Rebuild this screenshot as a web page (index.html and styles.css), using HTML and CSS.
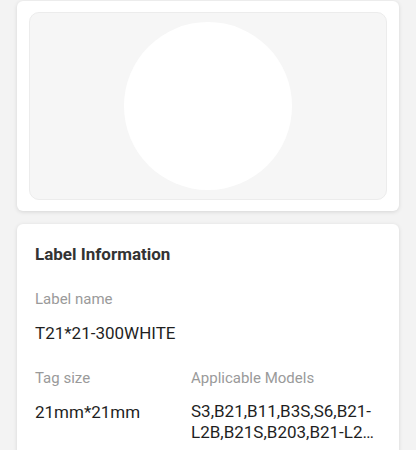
FILE: index.html
```html
<!DOCTYPE html>
<html>
<head>
<meta charset="utf-8">
<link rel="stylesheet" href="styles.css">
</head>
<body>
<div class="page">
  <div class="card preview-card">
    <div class="preview">
      <div class="label-circle"></div>
    </div>
  </div>
  <div class="card info-card">
    <div class="title">Label Information</div>
    <div class="field">
      <div class="field-label">Label name</div>
      <div class="field-value">T21*21-300WHITE</div>
    </div>
    <div class="row">
      <div class="field col-size">
        <div class="field-label">Tag size</div>
        <div class="field-value">21mm*21mm</div>
      </div>
      <div class="field col-models">
        <div class="field-label">Applicable Models</div>
        <div class="field-value clamp">S3,B21,B11,B3S,S6,B21-<span class="tail">L2B,B21S,B203,B21-L2B,B1,B21-C2B</span></div>
      </div>
    </div>
  </div>
</div>
</body>
</html>
```

FILE: styles.css
```css
html, body {
  margin: 0;
  padding: 0;
  background: #f3f3f3;
  font-family: Roboto, "Liberation Sans", Arial, sans-serif;
}
.page {
  padding: 1px 17px 0 17px;
  display: flex;
  flex-direction: column;
  gap: 13px;
}
.card {
  background: #ffffff;
  border-radius: 6px;
  box-shadow: 0 1px 4px rgba(0,0,0,0.12);
}
.preview-card {
  padding: 11px 12px;
}
.preview {
  height: 186px;
  background: #f6f6f6;
  border: 1px solid #ececec;
  border-radius: 10px;
  display: flex;
  align-items: center;
  justify-content: center;
}
.label-circle {
  width: 168px;
  height: 168px;
  border-radius: 50%;
  background: #ffffff;
}
.info-card {
  padding: 19px 18px 20px 18px;
  display: flex;
  flex-direction: column;
  gap: 23px;
}
.title {
  font-size: 17px;
  font-weight: 700;
  color: #333333;
  line-height: 22px;
}
.field {
  display: flex;
  flex-direction: column;
  gap: 12px;
}
.field-label {
  font-size: 15px;
  color: #9a9a9a;
  line-height: 22px;
}
.field-value {
  font-size: 17px;
  color: #1f1f1f;
  line-height: 22px;
}
.row {
  display: flex;
}
.col-size {
  width: 156px;
}
.col-models {
  flex: 1;
  padding-right: 4px;
}
.clamp {
  display: -webkit-box;
  -webkit-line-clamp: 2;
  -webkit-box-orient: vertical;
  overflow: hidden;
  line-height: 21px;
}
.tail {
  word-break: break-all;
}
```
